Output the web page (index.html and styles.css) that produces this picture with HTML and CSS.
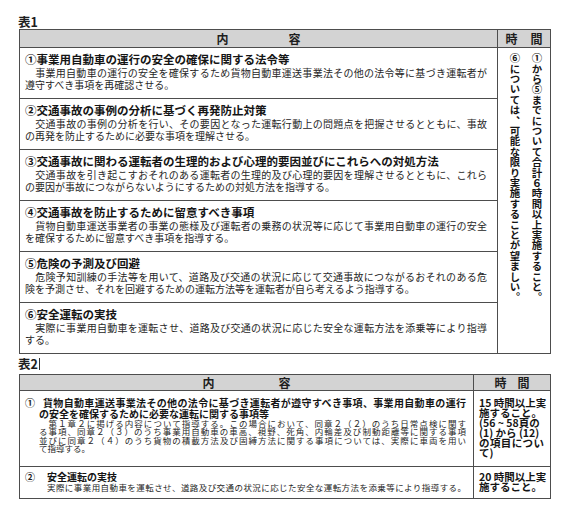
FILE: index.html
```html
<!DOCTYPE html>
<html lang="ja">
<head>
<meta charset="utf-8">
<link rel="stylesheet" href="styles.css">
</head>
<body>
<div class="page">
  <div class="label">表1</div>
  <table class="tbl t1">
    <colgroup><col class="t1-c1"><col class="t1-c2"></colgroup>
    <tr class="head">
      <th><span class="hd-wide"><span>内</span><span>容</span></span></th>
      <th><span class="hd-narrow"><span>時</span><span>間</span></span></th>
    </tr>
    <tr class="r1">
      <td>
        <div class="ttl">①事業用自動車の運行の安全の確保に関する法令等</div>
        <div class="ln j">　事業用自動車の運行の安全を確保するため貨物自動車運送事業法その他の法令等に基づき運転者が</div>
        <div class="ln">遵守すべき事項を再確認させる。</div>
      </td>
      <td class="time" rowspan="6">
        <div class="vert">①から⑤までについて合計６時間以上実施すること。<br>⑥については、可能な限り実施することが望ましい。</div>
      </td>
    </tr>
    <tr class="r1">
      <td>
        <div class="ttl">②交通事故の事例の分析に基づく再発防止対策</div>
        <div class="ln j">　交通事故の事例の分析を行い、その要因となった運転行動上の問題点を把握させるとともに、事故</div>
        <div class="ln">の再発を防止するために必要な事項を理解させる。</div>
      </td>
    </tr>
    <tr class="r1">
      <td>
        <div class="ttl">③交通事故に関わる運転者の生理的および心理的要因並びにこれらへの対処方法</div>
        <div class="ln j">　交通事故を引き起こすおそれのある運転者の生理的及び心理的要因を理解させるとともに、これら</div>
        <div class="ln">の要因が事故につながらないようにするための対処方法を指導する。</div>
      </td>
    </tr>
    <tr class="r1">
      <td>
        <div class="ttl">④交通事故を防止するために留意すべき事項</div>
        <div class="ln j">　貨物自動車運送事業者の事業の態様及び運転者の乗務の状況等に応じて事業用自動車の運行の安全</div>
        <div class="ln">を確保するために留意すべき事項を指導する。</div>
      </td>
    </tr>
    <tr class="r1">
      <td>
        <div class="ttl">⑤危険の予測及び回避</div>
        <div class="ln j">　危険予知訓練の手法等を用いて、道路及び交通の状況に応じて交通事故につながるおそれのある危</div>
        <div class="ln">険を予測させ、それを回避するための運転方法等を運転者が自ら考えるよう指導する。</div>
      </td>
    </tr>
    <tr class="r1">
      <td>
        <div class="ttl">⑥安全運転の実技</div>
        <div class="ln j">　実際に事業用自動車を運転させ、道路及び交通の状況に応じた安全な運転方法を添乗等により指導</div>
        <div class="ln">する。</div>
      </td>
    </tr>
  </table>

  <div class="label label2">表2<span class="caret"></span></div>
  <table class="tbl t2">
    <colgroup><col class="t2-c1"><col class="t2-c2"></colgroup>
    <tr class="head head2">
      <th><span class="hd-wide"><span>内</span><span>容</span></span></th>
      <th><span class="hd-narrow"><span>時</span><span>間</span></span></th>
    </tr>
    <tr class="r2a">
      <td class="item">
        <div class="num">①</div>
        <div class="body b1">
          <div class="ttl2 j first">貨物自動車運送事業法その他の法令に基づき運転者が遵守すべき事項、事業用自動車の運行</div>
          <div class="ttl2">の安全を確保するために必要な運転に関する事項等</div>
          <div class="ln2 j">　第１章２に掲げる内容について指導する。この場合において、同章２（２）のうち日常点検に関す</div>
          <div class="ln2 j">る事項、同章２（３）のうち事業用自動車の車高、視野、死角、内輪差及び制動距離等に関する事項</div>
          <div class="ln2 j">並びに同章２（４）のうち貨物の積載方法及び固縛方法に関する事項については、実際に車両を用い</div>
          <div class="ln2">て指導する。</div>
        </div>
      </td>
      <td class="time2"><div>15 時間以上実</div><div>施すること。</div><div>(56 ~ 58頁の</div><div>(1) から (12)</div><div class="j">の項目につい</div><div>て)</div></td>
    </tr>
    <tr class="r2b">
      <td class="item">
        <div class="num">②</div>
        <div class="body b2">
          <div class="ttl2">安全運転の実技</div>
          <div class="ln2 j">実際に事業用自動車を運転させ、道路及び交通の状況に応じた安全な運転方法を添乗等により指導する。</div>
        </div>
      </td>
      <td class="time2"><div>20 時間以上実</div><div>施すること。</div></td>
    </tr>
  </table>
</div>
</body>
</html>
```

FILE: styles.css
```css
html, body {
  margin: 0;
  padding: 0;
  background: #ffffff;
}

body {
  font-family: "Noto Sans CJK JP", "Noto Sans", sans-serif;
  color: #1e1e1e;
}

.page {
  padding-left: 19px;
  width: 531px;
}

.label {
  margin-top: 15px;
  height: 14px;
  line-height: 14px;
  font-size: 12.5px;
  font-weight: bold;
  margin-left: -1px;
  display: flex;
  align-items: center;
}

.label2 {
  margin-top: 3px;
  margin-bottom: 3px;
}

.caret {
  display: inline-block;
  width: 1px;
  height: 12px;
  background: #333;
  margin-left: 1px;
}

.tbl {
  width: 531px;
  border-collapse: collapse;
  table-layout: fixed;
}

.tbl th,
.tbl td {
  border: 1px solid #4d4d4d;
  padding: 0;
  vertical-align: top;
  text-align: left;
}

.t1-c1 { width: 478px; }
.t1-c2 { width: 53px; }
.t2-c1 { width: 454px; }
.t2-c2 { width: 77px; }

.head th {
  background: #d3d3d3;
  height: 17px;
  font-size: 12px;
  font-weight: bold;
  line-height: 17px;
  vertical-align: middle;
}

.head2 th {
  height: 15px;
  line-height: 15px;
}

.hd-wide {
  display: flex;
  justify-content: center;
  gap: 60px;
}

.hd-narrow {
  display: flex;
  justify-content: center;
  gap: 13px;
}

.t2 .hd-wide { gap: 64px; }
.t2 .hd-narrow { gap: 11px; }

/* Table 1 rows */
.r1 td {
  height: 46px;
  padding: 4px 10px 0 5px;
}

.ttl {
  font-size: 11.5px;
  font-weight: bold;
  line-height: 15px;
  white-space: nowrap;
  color: #151515;
}

.ln {
  font-size: 10px;
  line-height: 11.5px;
  color: #262626;
}

.j {
  text-align: justify;
  text-align-last: justify;
}

.t1 td.time {
  padding: 5px 0 0 3px;
  vertical-align: top;
}

.vert {
  writing-mode: vertical-rl;
  font-size: 10.4px;
  line-height: 22px;
  font-weight: bold;
  height: 255px;
  margin: 0 auto;
  color: #151515;
}

/* Table 2 rows */
.num {
  float: left;
  width: 13px;
  margin-left: 5px;
  font-size: 10px;
  line-height: 11px;
  font-weight: bold;
}

.body {
  margin-right: 7px;
}

.b1 { margin-left: 19px; }
.b2 { margin-left: 27px; }

.ttl2 {
  font-size: 10px;
  line-height: 11px;
  font-weight: bold;
  color: #151515;
}

.ttl2.first {
  text-indent: 4px;
}

.ln2 {
  font-size: 8.5px;
  line-height: 8.4px;
  color: #262626;
}

.r2a td {
  height: 68px;
  padding-top: 6px;
}

.r2b td {
  height: 26px;
  padding-top: 5px;
}

.r2b .ttl2,
.r2b .ln2,
.r2b .num {
  line-height: 10px;
}

.tbl td.time2 {
  font-size: 10.5px;
  font-weight: bold;
  line-height: 10px;
  padding-left: 5px;
  padding-right: 6px;
  white-space: nowrap;
  color: #151515;
}

.r2a td.time2 {
  padding-top: 7px;
}
```
